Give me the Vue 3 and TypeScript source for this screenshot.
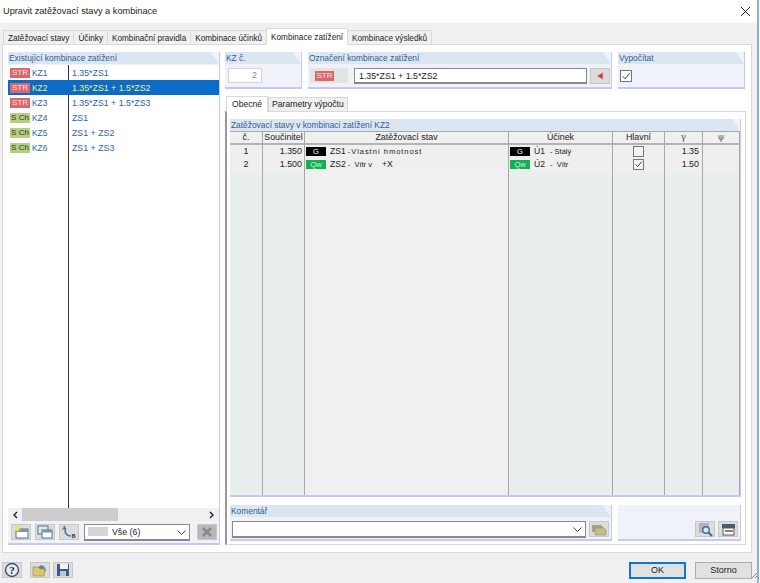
<script setup lang="ts">
interface ListRow { tag: string; id: string; text: string; sch: boolean; sel?: boolean }
const rows: ListRow[] = [
  { tag: 'STR', id: 'KZ1', text: '1.35*ZS1', sch: false },
  { tag: 'STR', id: 'KZ2', text: '1.35*ZS1 + 1.5*ZS2', sch: false, sel: true },
  { tag: 'STR', id: 'KZ3', text: '1.35*ZS1 + 1.5*ZS3', sch: false },
  { tag: 'S Ch', id: 'KZ4', text: 'ZS1', sch: true },
  { tag: 'S Ch', id: 'KZ5', text: 'ZS1 + ZS2', sch: true },
  { tag: 'S Ch', id: 'KZ6', text: 'ZS1 + ZS3', sch: true },
]
const tabs = ['Zatěžovací stavy', 'Účinky', 'Kombinační pravidla', 'Kombinace účinků', 'Kombinace zatížení', 'Kombinace výsledků']
</script>

<template>
  <div class="win">
    <div class="title">
      <span>Upravit zatěžovací stavy a kombinace</span>
      <svg class="close" width="11" height="11" viewBox="0 0 11 11"><path d="M1 1l9 9M10 1l-9 9" stroke="#222" stroke-width="1" fill="none"/></svg>
    </div>
    <div class="body">
      <div class="tabs">
        <div v-for="t in tabs" :key="t" class="tab" :class="{ on: t === 'Kombinace zatížení' }">{{ t }}</div>
      </div>
      <div class="sheet">
        <div class="left group">
          <div class="ghead">Existující kombinace zatížení</div>
          <div class="list">
            <div class="divider"></div>
            <div v-for="r in rows" :key="r.id" class="lrow" :class="{ sel: r.sel }">
              <span class="tag" :class="r.sch ? 'sch' : 'str'">{{ r.tag }}</span>
              <span class="lid">{{ r.id }}</span>
              <span class="ltx">{{ r.text }}</span>
            </div>
          </div>
          <div class="hscroll">
            <svg width="6" height="8" viewBox="0 0 6 8"><path d="M5 1L2 4l3 3" stroke="#222" stroke-width="1.4" fill="none"/></svg>
            <div class="thumb"></div>
            <svg width="6" height="8" viewBox="0 0 6 8"><path d="M1 1l3 3-3 3" stroke="#222" stroke-width="1.4" fill="none"/></svg>
          </div>
          <div class="ltools">
            <div class="ibtn"><svg width="16" height="14" viewBox="0 0 16 14"><rect x="3" y="4" width="12" height="9" fill="#fff" stroke="#5b7088"/><rect x="3" y="4" width="12" height="3" fill="#7d95ad"/><circle cx="4" cy="3.5" r="2.6" fill="#f2e34c"/></svg></div>
            <div class="ibtn"><svg width="16" height="14" viewBox="0 0 16 14"><rect x="1" y="1" width="10" height="8" fill="#dfe6ee" stroke="#5b7088"/><rect x="5" y="5" width="10" height="8" fill="#fff" stroke="#5b7088"/><rect x="5" y="5" width="10" height="2.5" fill="#7d95ad"/></svg></div>
            <div class="ibtn"><svg width="16" height="14" viewBox="0 0 16 14"><path d="M4 5c0 4 2 6 6 6" stroke="#4a7ba8" stroke-width="1.6" fill="none"/><text x="1" y="5" class="ic-t">A</text><text x="10.500" y="13" class="ic-t">B</text></svg></div>
            <div class="combo small"><span class="swatch"></span><span class="ctx">Vše (6)</span><svg class="chev" width="9" height="5" viewBox="0 0 9 5"><path d="M.5.5l4 4 4-4" stroke="#444" fill="none"/></svg></div>
            <div class="ibtn dis"><svg width="14" height="14" viewBox="0 0 14 14"><path d="M3 3l8 8M11 3l-8 8" stroke="#8a8a8a" stroke-width="2.6" fill="none"/></svg></div>
          </div>
        </div>

        <div class="right">
          <div class="top">
            <div class="group kz">
              <div class="ghead">KZ č.</div>
              <div class="gpad"><div class="numbox">2</div></div>
            </div>
            <div class="group oz">
              <div class="ghead">Označení kombinace zatížení</div>
              <div class="gpad ozrow">
                <div class="strbox"><span class="tag str wide">STR</span></div>
                <div class="input">1.35*ZS1 + 1.5*ZS2</div>
                <div class="ibtn arrow"><svg width="10" height="10" viewBox="0 0 10 10"><path d="M2 5l6-3.500v7z" fill="#d0303a" stroke="#eab0b0" stroke-width=".8"/></svg></div>
              </div>
            </div>
            <div class="group vy">
              <div class="ghead">Vypočítat</div>
              <div class="gpad"><div class="chk big"><svg width="11" height="11" viewBox="0 0 11 11"><path d="M2 5.500l2.500 2.500L9.500 2" stroke="#333" stroke-width="1.1" fill="none"/></svg></div></div>
            </div>
          </div>

          <div class="subtabs">
            <div class="stab on">Obecné</div>
            <div class="stab">Parametry výpočtu</div>
          </div>
          <div class="subsheet">
            <div class="group tbl">
              <div class="ghead">Zatěžovací stavy v kombinaci zatížení KZ2</div>
              <div class="grid">
                <div class="hc c">č.</div>
                <div class="hc c">Součinitel</div>
                <div class="hc c">Zatěžovací stav</div>
                <div class="hc c">Účinek</div>
                <div class="hc c">Hlavní</div>
                <div class="hc c greek">γ</div>
                <div class="hc c greek">ψ</div>

                <div class="dc c">1</div>
                <div class="dc r r2">1.350</div>
                <div class="dc"><span class="blk">G</span><span class="nm">ZS1</span><span class="tiny sp">-Vlastní hmotnost</span></div>
                <div class="dc"><span class="blk">G</span><span class="nm uc">Ú1</span><span class="tiny">- Stálý</span></div>
                <div class="dc c"><span class="chk"></span></div>
                <div class="dc r">1.35</div>
                <div class="dc"></div>

                <div class="dc c">2</div>
                <div class="dc r r2">1.500</div>
                <div class="dc"><span class="blk grn">Qw</span><span class="nm">ZS2</span><span class="tiny">- &nbsp;Vítr v</span><span class="nm plus">+X</span></div>
                <div class="dc"><span class="blk grn">Qw</span><span class="nm uc">Ú2</span><span class="tiny">- &nbsp;Vítr</span></div>
                <div class="dc c"><span class="chk"><svg width="9" height="9" viewBox="0 0 11 11"><path d="M2 5.500l2.500 2.500L9.500 2" stroke="#333" stroke-width="1.2" fill="none"/></svg></span></div>
                <div class="dc r">1.50</div>
                <div class="dc"></div>

                <div class="fill"></div><div class="fill"></div><div class="fill wh"></div><div class="fill"></div><div class="fill"></div><div class="fill"></div><div class="fill"></div>
              </div>
            </div>
            <div class="bottom">
              <div class="group kom">
                <div class="ghead">Komentář</div>
                <div class="gpad komrow">
                  <div class="combo"><svg class="chev" width="9" height="5" viewBox="0 0 9 5"><path d="M.5.5l4 4 4-4" stroke="#444" fill="none"/></svg></div>
                  <div class="ibtn"><svg width="16" height="13" viewBox="0 0 16 13"><path d="M1 2h9l2 2v5H1z" fill="#a8a282"/><path d="M4 5h9l2 2v5H4z" fill="#c9bd86" stroke="#8f8a6c" stroke-width=".6"/></svg></div>
                </div>
              </div>
              <div class="group side">
                <div class="ibtn"><svg width="15" height="15" viewBox="0 0 15 15"><rect x="1" y="1" width="10" height="10" fill="#b4b4b8"/><circle cx="8" cy="8" r="3.200" fill="#dfe9f4" stroke="#3f6aa5" stroke-width="1.4"/><path d="M10.500 10.500l3.500 3.500" stroke="#3f6aa5" stroke-width="2"/></svg></div>
                <div class="ibtn"><svg width="15" height="13" viewBox="0 0 15 13"><rect x="1" y="1" width="13" height="4" fill="#4b5b70"/><rect x="2" y="5" width="11" height="7" fill="#fff" stroke="#4b5b70"/><path d="M4 8h8" stroke="#b7794a" stroke-width="2"/></svg></div>
              </div>
            </div>
          </div>
        </div>
      </div>
      <div class="footer">
        <div class="ibtn"><svg width="16" height="16" viewBox="0 0 16 16"><circle cx="8" cy="8" r="6.500" fill="#e6ebf2" stroke="#44506a" stroke-width="1.4"/><text x="8" y="12" text-anchor="middle" class="help">?</text></svg></div>
        <div class="ibtn folder"><svg width="16" height="14" viewBox="0 0 16 14"><path d="M6 5c2-4 6-4 8 2l-1 2z" fill="#5f83b8"/><path d="M1 4h5l2 2h5l-1 7H1z" fill="#d8c96f" stroke="#968f4c" stroke-width=".7"/></svg></div>
        <div class="ibtn"><svg width="14" height="14" viewBox="0 0 14 14"><rect x="1" y="1" width="12" height="12" fill="#3c5a8c"/><rect x="4" y="1" width="8" height="5" fill="#f4f4f4"/><rect x="4" y="8" width="6" height="5" fill="#b9c7da"/></svg></div>
        <div class="spacer"></div>
        <div class="btn ok">OK</div>
        <div class="btn">Storno</div>
      </div>
    </div>
    <svg class="grip" width="5" height="5" viewBox="0 0 5 5"><path d="M0 5l5-5M3 5l2-2" stroke="#888" fill="none"/></svg>
  </div>
</template>

<style>
html, body { margin: 0; background: #fff; }
</style>

<style scoped>
.win { width: 759px; height: 583px; box-sizing: border-box; font: 9px "Liberation Sans", Arial, sans-serif; color: #222; border-right: 2px solid #86b3d9; display: flex; flex-direction: column; overflow: hidden; background: #f0f0f0; position: relative; }
.title { height: 23px; flex: none; background: #fff; display: flex; align-items: center; justify-content: space-between; padding: 0 6px 1px 3px; box-sizing: border-box; font-size: 9.2px; }
.body { flex: 1; display: flex; flex-direction: column; padding: 5px 5px 0 2px; min-height: 0; }
.tabs { display: flex; height: 16px; flex: none; padding-left: 1px; align-items: flex-end; }
.tab { height: 14px; line-height: 15px; padding: 0 4px; background: #f0f0f0; border: 1px solid #d9d9d9; border-bottom: 0; box-sizing: border-box; margin-right: -1px; font-size: 8.2px; white-space: nowrap; }
.tab.on { height: 17px; background: #fff; position: relative; z-index: 1; margin-bottom: -1px; padding: 0 4px; line-height: 18px; }
.sheet { width: 750px; height: 509px; flex: none; box-sizing: border-box; background: #fff; border: 1px solid #d9d9d9; padding: 7px 5px 7px 5px; display: flex; gap: 5px; }
.group { background: #eff3f9; border-right: 1px solid #c7c8ee; border-bottom: 2px solid #c7c8ee; box-sizing: border-box; display: flex; flex-direction: column; }
.ghead { height: 12px; line-height: 12px; background: #dce6f3; color: #2f5f8f; padding-left: 1px; font-size: 8.4px; white-space: nowrap; flex: none; clip-path: polygon(0 0, calc(100% - 8px) 0, 100% 100%, 0 100%); }
.left { width: 212px; height: 493px; flex: none; }
.list { flex: 1; background: #fff; position: relative; margin-top: 1px; min-height: 0; }
.divider { position: absolute; left: 60px; top: 0; bottom: 0; width: 1px; background: #333; }
.lrow { height: 15px; display: flex; align-items: center; position: relative; font-size: 8.8px; color: #2c62b0; }
.lrow.sel { background: #0a6cc8; color: #f3f36a; }
.tag { display: inline-block; width: 20px; height: 10px; line-height: 10px; text-align: center; font-size: 8px; margin-left: 2px; flex: none; white-space: nowrap; }
.tag.str { background: #d9686c; color: #f6e2e2; }
.tag.sch { background: #b5d084; color: #2a3a10; }
.lid { width: 40px; margin-left: 2px; flex: none; font-size: 8.4px; }
.ltx { white-space: nowrap; }
.hscroll { height: 13px; flex: none; background: #f0f0f0; display: flex; align-items: center; justify-content: space-between; padding: 0 4px; position: relative; }
.thumb { position: absolute; left: 14px; top: 0; width: 96px; height: 13px; background: #cdcdcd; }
.ltools { height: 22px; flex: none; display: flex; align-items: center; padding: 0 0 0 3px; gap: 4px; }
.ibtn { width: 20px; height: 16px; box-sizing: border-box; background: #dcdcdc; border: 1px solid #c8c8c8; display: flex; align-items: center; justify-content: center; flex: none; }
.ibtn.dis { background: #b8b8b8; margin-left: 3px; }
.ic-t { font: bold 6px "Liberation Serif", serif; fill: #333; }
.help { font: bold 11px "Liberation Serif", serif; fill: #223; }
.combo { background: #fff; border: 1px solid #888; border-bottom-width: 2px; box-sizing: border-box; height: 17px; flex: 1; display: flex; align-items: center; position: relative; }
.combo.small { width: 106px; flex: none; margin-left: 1px; }
.swatch { width: 20px; height: 9px; background: #d5d5d5; margin-left: 3px; }
.ctx { margin-left: 4px; font-size: 8.8px; }
.chev { position: absolute; right: 3px; top: 5px; }
.right { flex: 1; display: flex; flex-direction: column; min-width: 0; }
.top { display: flex; gap: 6px; height: 37px; flex: none; }
.gpad { padding: 4px 3px; flex: 1; display: flex; align-items: flex-start; }
.kz { width: 77px; flex: none; }
.numbox { width: 34px; height: 15px; box-sizing: border-box; background: #fff; border: 1px solid #d4d4d4; text-align: right; padding-right: 4px; line-height: 13px; color: #888; }
.oz { width: 304px; flex: none; }
.ozrow { gap: 6px; padding-left: 2px; padding-right: 1px; }
.strbox { width: 38px; height: 15px; background: #e4e4e4; display: flex; align-items: center; flex: none; }
.tag.wide { margin-left: 5px; width: 19px; }
.input { flex: 1; height: 16px; box-sizing: border-box; background: #fff; border: 1px solid #888; line-height: 14px; padding-left: 4px; font-size: 8.8px; border-bottom-width: 2px; }
.arrow { height: 16px; margin-left: -3px; }
.vy { width: 127px; flex: none; }
.chk { width: 9px; height: 9px; border: 1px solid #777; background: #f4f4f4; display: inline-flex; align-items: center; justify-content: center; box-sizing: content-box; }
.chk.big { width: 10px; height: 10px; margin: 2px 0 0 -1px; background: #fff; }
.subtabs { display: flex; height: 16px; margin-top: 6px; flex: none; align-items: flex-end; padding-left: 1px; }
.stab { height: 14px; line-height: 13px; padding: 0 3px; border: 1px solid #d9d9d9; border-bottom: 0; background: #f0f0f0; font-size: 8.6px; box-sizing: border-box; white-space: nowrap; }
.stab.on { height: 16px; background: #fff; padding: 0 5px; line-height: 14px; margin-bottom: -1px; position: relative; z-index: 1; }
.subsheet { flex: 1; box-sizing: border-box; border: 1px solid #d9d9d9; border-left: 2px solid #999; padding: 7px 4px 3px 3px; display: flex; flex-direction: column; gap: 8px; background: #fff; min-height: 0; width: 521px; }
.tbl { flex: 1; min-height: 0; }
.grid { flex: 1; display: grid; grid-template-columns: 33px 42px 204px 104px 52px 38px 37px; grid-template-rows: 14px 13px 13px 1fr; }
.hc, .dc, .fill { border-right: 1px solid #a8a8a8; box-sizing: border-box; }
.hc { background: #f0f0f0; border-top: 1px solid #a8a8a8; border-bottom: 2px solid #b4b4b4; line-height: 11px; font-size: 8.9px; }
.dc { background: #efefef; display: flex; align-items: center; white-space: nowrap; line-height: 13px; font-size: 8.9px; padding: 0 1px 1px; }
.c { text-align: center; justify-content: center; }
.r { justify-content: flex-end; padding-right: 3px; }
.r2 { padding-right: 2px; }
.fill { background: #e8efed; }
.fill.wh { background: #f0f0f0; }
.greek { font-family: "DejaVu Serif", serif; color: #555; }
.blk { display: inline-block; width: 20px; height: 9px; line-height: 9px; background: #000; color: #fff; text-align: center; font-size: 7.5px; flex: none; margin-right: 4px; }
.blk.grn { background: #12b050; color: #d8f5e0; }
.nm { margin-right: 2px; font-size: 8.6px; }
.uc { margin-right: 5px; }
.plus { margin-left: 10px; }
.tiny { font-size: 7.5px; }
.sp { letter-spacing: .95px; }
.bottom { display: flex; gap: 6px; height: 36px; flex: none; }
.kom { width: 382px; flex: none; }
.komrow { gap: 3px; padding: 4px 2px 0 2px; }
.side { width: 123px; flex: none; flex-direction: row; justify-content: flex-end; align-items: flex-end; gap: 3px; padding: 0 2px 2px 0; }
.footer { flex: 1; display: flex; align-items: flex-start; padding-top: 9px; gap: 3px; }
.folder { margin-left: 5px; }
.spacer { flex: 1; }
.btn { width: 57px; height: 17px; box-sizing: border-box; background: #e1e1e1; border: 1px solid #adadad; text-align: center; line-height: 15px; margin-left: 6px; }
.btn.ok { border: 2px solid #0a78d7; line-height: 13px; }
.grip { position: absolute; right: 0; bottom: 5px; }
</style>
